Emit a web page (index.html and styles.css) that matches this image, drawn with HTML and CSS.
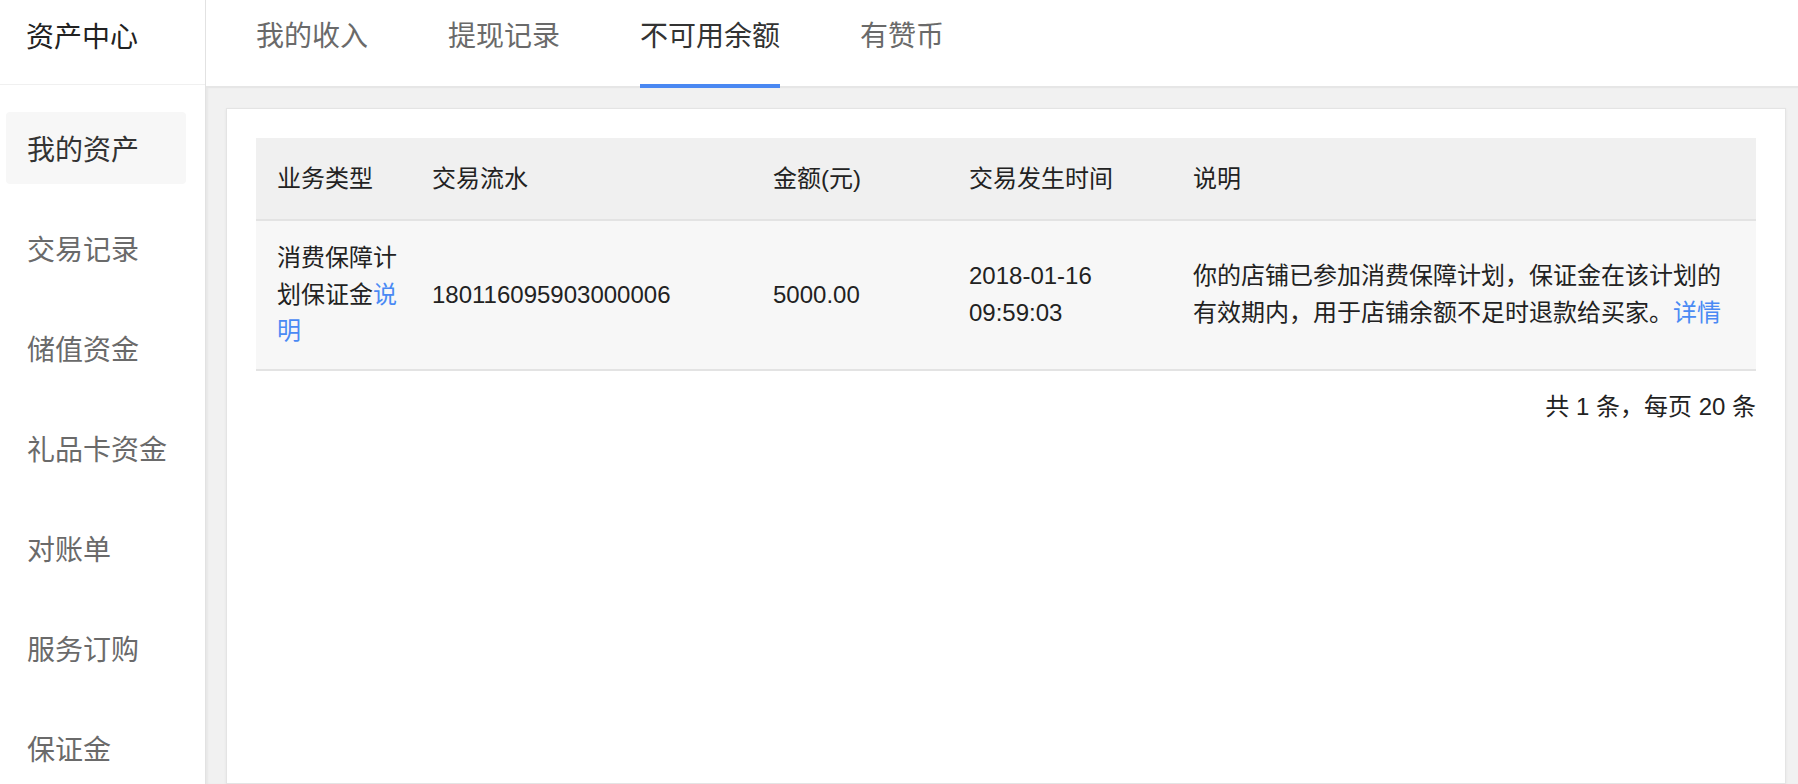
FILE: index.html
```html
<!DOCTYPE html>
<html lang="zh-CN">
<head>
<meta charset="utf-8">
<title>资产中心</title>
<link rel="stylesheet" href="styles.css">
</head>
<body>
<div class="app">
  <aside class="sidebar">
    <div class="brand">资产中心</div>
    <nav class="side-nav">
      <a class="side-item active">我的资产</a>
      <a class="side-item">交易记录</a>
      <a class="side-item">储值资金</a>
      <a class="side-item">礼品卡资金</a>
      <a class="side-item">对账单</a>
      <a class="side-item">服务订购</a>
      <a class="side-item">保证金</a>
    </nav>
  </aside>
  <main class="main">
    <div class="tabs">
      <a class="tab">我的收入</a>
      <a class="tab">提现记录</a>
      <a class="tab active">不可用余额</a>
      <a class="tab">有赞币</a>
    </div>
    <div class="content">
      <section class="card">
        <table class="table">
          <colgroup>
            <col class="c1"><col class="c2"><col class="c3"><col class="c4"><col class="c5">
          </colgroup>
          <thead>
            <tr>
              <th>业务类型</th>
              <th>交易流水</th>
              <th>金额(元)</th>
              <th>交易发生时间</th>
              <th>说明</th>
            </tr>
          </thead>
          <tbody>
            <tr>
              <td>消费保障计划保证金<a class="link">说明</a></td>
              <td>180116095903000006</td>
              <td>5000.00</td>
              <td>2018-01-16 09:59:03</td>
              <td>你的店铺已参加消费保障计划，保证金在该计划的有效期内，用于店铺余额不足时退款给买家。<a class="link">详情</a></td>
            </tr>
          </tbody>
        </table>
        <div class="pager">共 1 条，每页 20 条</div>
      </section>
    </div>
  </main>
</div>
</body>
</html>
```

FILE: styles.css
```css
* {
  box-sizing: border-box;
}

html, body {
  margin: 0;
  padding: 0;
  height: 100%;
  overflow: hidden;
}

body {
  font-family: "Liberation Sans", "Noto Sans CJK SC", sans-serif;
  color: #333;
  background: #fff;
}

a {
  text-decoration: none;
  cursor: pointer;
}

.app {
  display: flex;
  height: 784px;
}

/* Sidebar */
.sidebar {
  width: 206px;
  flex: 0 0 206px;
  border-right: 1px solid #e2e2e2;
  background: #fff;
  display: flex;
  flex-direction: column;
}

.brand {
  height: 87px;
  border-bottom: 1px solid #f0f0f0;
  padding: 18px 0 0 26px;
  font-size: 28px;
  line-height: 40px;
  color: #222;
}

.side-nav {
  display: flex;
  flex-direction: column;
  gap: 28px;
  padding: 27px 19px 0 6px;
}

.side-item {
  display: flex;
  align-items: center;
  height: 72px;
  padding-left: 21px;
  border-radius: 4px;
  font-size: 28px;
  color: #6a6a6a;
}

.side-item.active {
  background: #f7f7f7;
  color: #333;
}

/* Main */
.main {
  flex: 1;
  display: flex;
  flex-direction: column;
  min-width: 0;
}

.tabs {
  height: 88px;
  flex: 0 0 88px;
  display: flex;
  gap: 80px;
  padding-left: 50px;
  border-bottom: 2px solid #e6e6e6;
  background: #fff;
}

.tab {
  height: 88px;
  margin-bottom: -2px;
  padding-top: 17px;
  font-size: 28px;
  line-height: 40px;
  color: #6a6a6a;
  border-bottom: 4px solid transparent;
}

.tab.active {
  color: #333;
  border-bottom-color: #4a88f2;
}

.content {
  flex: 1;
  background: #f1f1f1;
  padding: 20px 12px 0 20px;
  box-shadow: inset 2px 0 2px rgba(0, 0, 0, 0.04);
}

.card {
  height: 100%;
  background: #fff;
  border: 1px solid #e4e4e4;
  box-shadow: 0 1px 3px rgba(0, 0, 0, 0.06);
  padding: 29px 29px 0 29px;
}

.table {
  width: 100%;
  border-collapse: collapse;
  table-layout: fixed;
  font-size: 24px;
  color: #222;
}

.c1 { width: 155px; }
.c2 { width: 341px; }
.c3 { width: 196px; }
.c4 { width: 224px; }
.c5 { width: auto; }

.table th {
  height: 82px;
  background: #f0f0f0;
  border-bottom: 2px solid #e3e3e3;
  text-align: left;
  font-weight: normal;
  padding: 0 0 0 21px;
  line-height: 36px;
}

.table td {
  height: 150px;
  background: #f7f7f7;
  border-bottom: 2px solid #e3e3e3;
  padding: 0 0 0 21px;
  line-height: 36.7px;
  vertical-align: middle;
  word-break: break-all;
}

.table th:last-child,
.table td:last-child {
  padding-right: 21px;
}

.table td:nth-child(4) {
  word-break: normal;
}

.link {
  color: #4a8af4;
}

.pager {
  text-align: right;
  font-size: 24px;
  line-height: 36px;
  padding-top: 18px;
  color: #222;
}
```
